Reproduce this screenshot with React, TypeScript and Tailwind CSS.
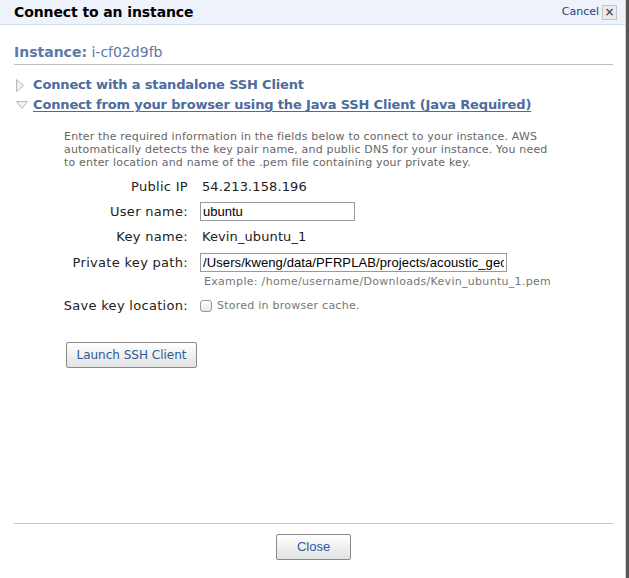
const verdana = "font-['DejaVu_Sans',Verdana,sans-serif]";
const arial = "font-['Liberation_Sans',Arial,sans-serif]";

function RightTriangle() {
  return (
    <svg width="8" height="13" viewBox="0 0 8 13" className="shrink-0">
      <path d="M0.5 0.5 L7.5 6.5 L0.5 12.5 Z" fill="#f2f2f2" stroke="#b8b8b8" />
    </svg>
  );
}

function DownTriangle() {
  return (
    <svg width="12" height="8" viewBox="0 0 12 8" className="shrink-0">
      <path d="M0.5 0.5 L11.5 0.5 L6 7.5 Z" fill="#f2f2f2" stroke="#b8b8b8" />
    </svg>
  );
}

function FormRow({ label, h, children }: { label: string; h: string; children: React.ReactNode }) {
  return (
    <div className={`flex items-center ${h}`}>
      <div className="w-[174px] shrink-0 text-right text-[13px] tracking-[0.3px] text-[#222]">{label}</div>
      <div className="ml-[12px] flex items-center">{children}</div>
    </div>
  );
}

export default function App() {
  return (
    <div className={`flex h-[578px] w-[629px] bg-white ${verdana}`}>
      <div className="flex w-[626px] shrink-0 flex-col border-r border-[#c9d6e6]">
        {/* header */}
        <div className="flex h-[25px] shrink-0 items-center justify-between border-b border-[#d3deeb] bg-[#eef3fb] pl-[14px] pr-[8px]">
          <h1 className="text-[14px] font-bold tracking-[-0.1px] text-black">Connect to an instance</h1>
          <div className="flex items-center gap-[3px]">
            <span className="text-[11px] text-[#1f3a80]">Cancel</span>
            <span className="flex h-[15px] w-[15px] items-center justify-center border border-[#c4c4c4] bg-[#ececec] text-[12px] leading-none font-bold text-[#555]">
              ×
            </span>
          </div>
        </div>

        <div className="flex flex-1 flex-col pl-[14px] pr-[12px]">
          <div className="mt-[18px] text-[14px] leading-[18px] text-[#5a79a8]">
            <span className="font-bold">Instance:</span> i-cf02d9fb
          </div>
          <div className="mt-[3px] border-t border-[#bdbdbd]" />

          <div className="mt-[10px] flex h-[20px] items-center pl-[2px]">
            <div className="flex w-[17px] justify-start">
              <RightTriangle />
            </div>
            <span className="text-[13px] font-bold tracking-[-0.15px] text-[#4b6c9c]">
              Connect with a standalone SSH Client
            </span>
          </div>
          <div className="flex h-[20px] items-center pl-[2px]">
            <div className="flex w-[17px] justify-start">
              <DownTriangle />
            </div>
            <span className="text-[13px] font-bold tracking-[-0.15px] text-[#4b6c9c] underline underline-offset-2">
              Connect from your browser using the Java SSH Client (Java Required)
            </span>
          </div>

          <p className="mt-[15px] ml-[50px] whitespace-nowrap text-[11px] leading-[13px] tracking-[0.18px] text-[#666]">
            Enter the required information in the fields below to connect to your instance. AWS
            <br />
            automatically detects the key pair name, and public DNS for your instance. You need
            <br />
            to enter location and name of the .pem file containing your private key.
          </p>

          <div className="mt-[5px] flex flex-col">
            <FormRow label="Public IP" h="h-[25px]">
              <span className="pl-[2px] text-[13px] tracking-[0.1px] text-[#222]">54.213.158.196</span>
            </FormRow>
            <FormRow label="User name:" h="h-[25px]">
              <input
                readOnly
                value="ubuntu"
                className={`h-[19px] w-[155px] border border-[#9a9a9a] px-[2px] text-[13px] text-black outline-none ${arial}`}
              />
            </FormRow>
            <FormRow label="Key name:" h="h-[26px]">
              <span className="pl-[2px] text-[13px] tracking-[0.1px] text-[#222]">Kevin_ubuntu_1</span>
            </FormRow>
            <FormRow label="Private key path:" h="h-[25px]">
              <input
                readOnly
                value="/Users/kweng/data/PFRPLAB/projects/acoustic_geoloc"
                className={`h-[19px] w-[307px] border border-[#9a9a9a] px-[2px] text-[13px] tracking-[0.1px] text-black outline-none ${arial}`}
              />
            </FormRow>
            <div className="ml-[188px] flex h-[14px] items-center pl-[2px] text-[11px] tracking-[0.3px] text-[#777]">
              Example: /home/username/Downloads/Kevin_ubuntu_1.pem
            </div>
            <FormRow label="Save key location:" h="h-[32px] pt-[2px]">
              <span className="h-[12px] w-[12px] rounded-[3px] border border-[#9a9a9a] bg-gradient-to-b from-white to-[#e6e6e6]" />
              <span className="ml-[5px] text-[11px] tracking-[0.25px] text-[#777]">Stored in browser cache.</span>
            </FormRow>
          </div>

          <div className="mt-[21px] ml-[52px]">
            <button className="h-[26px] w-[131px] rounded-[2px] border border-[#8a8a8a] bg-gradient-to-b from-white to-[#e2e2e2] text-[12px] text-[#2b5a98]">
              Launch SSH Client
            </button>
          </div>

          <div className="flex-1" />

          <div className="border-t border-[#c8c8c8]" />
          <div className="flex justify-center pt-[10px] pb-[18px]">
            <button
              className={`h-[26px] w-[75px] rounded-[2px] border border-[#8a8a8a] bg-gradient-to-b from-white to-[#e2e2e2] text-[13px] text-[#2b5aa0] ${arial}`}
            >
              Close
            </button>
          </div>
        </div>
      </div>
      <div className="flex-1 bg-[#565656]" />
    </div>
  );
}
